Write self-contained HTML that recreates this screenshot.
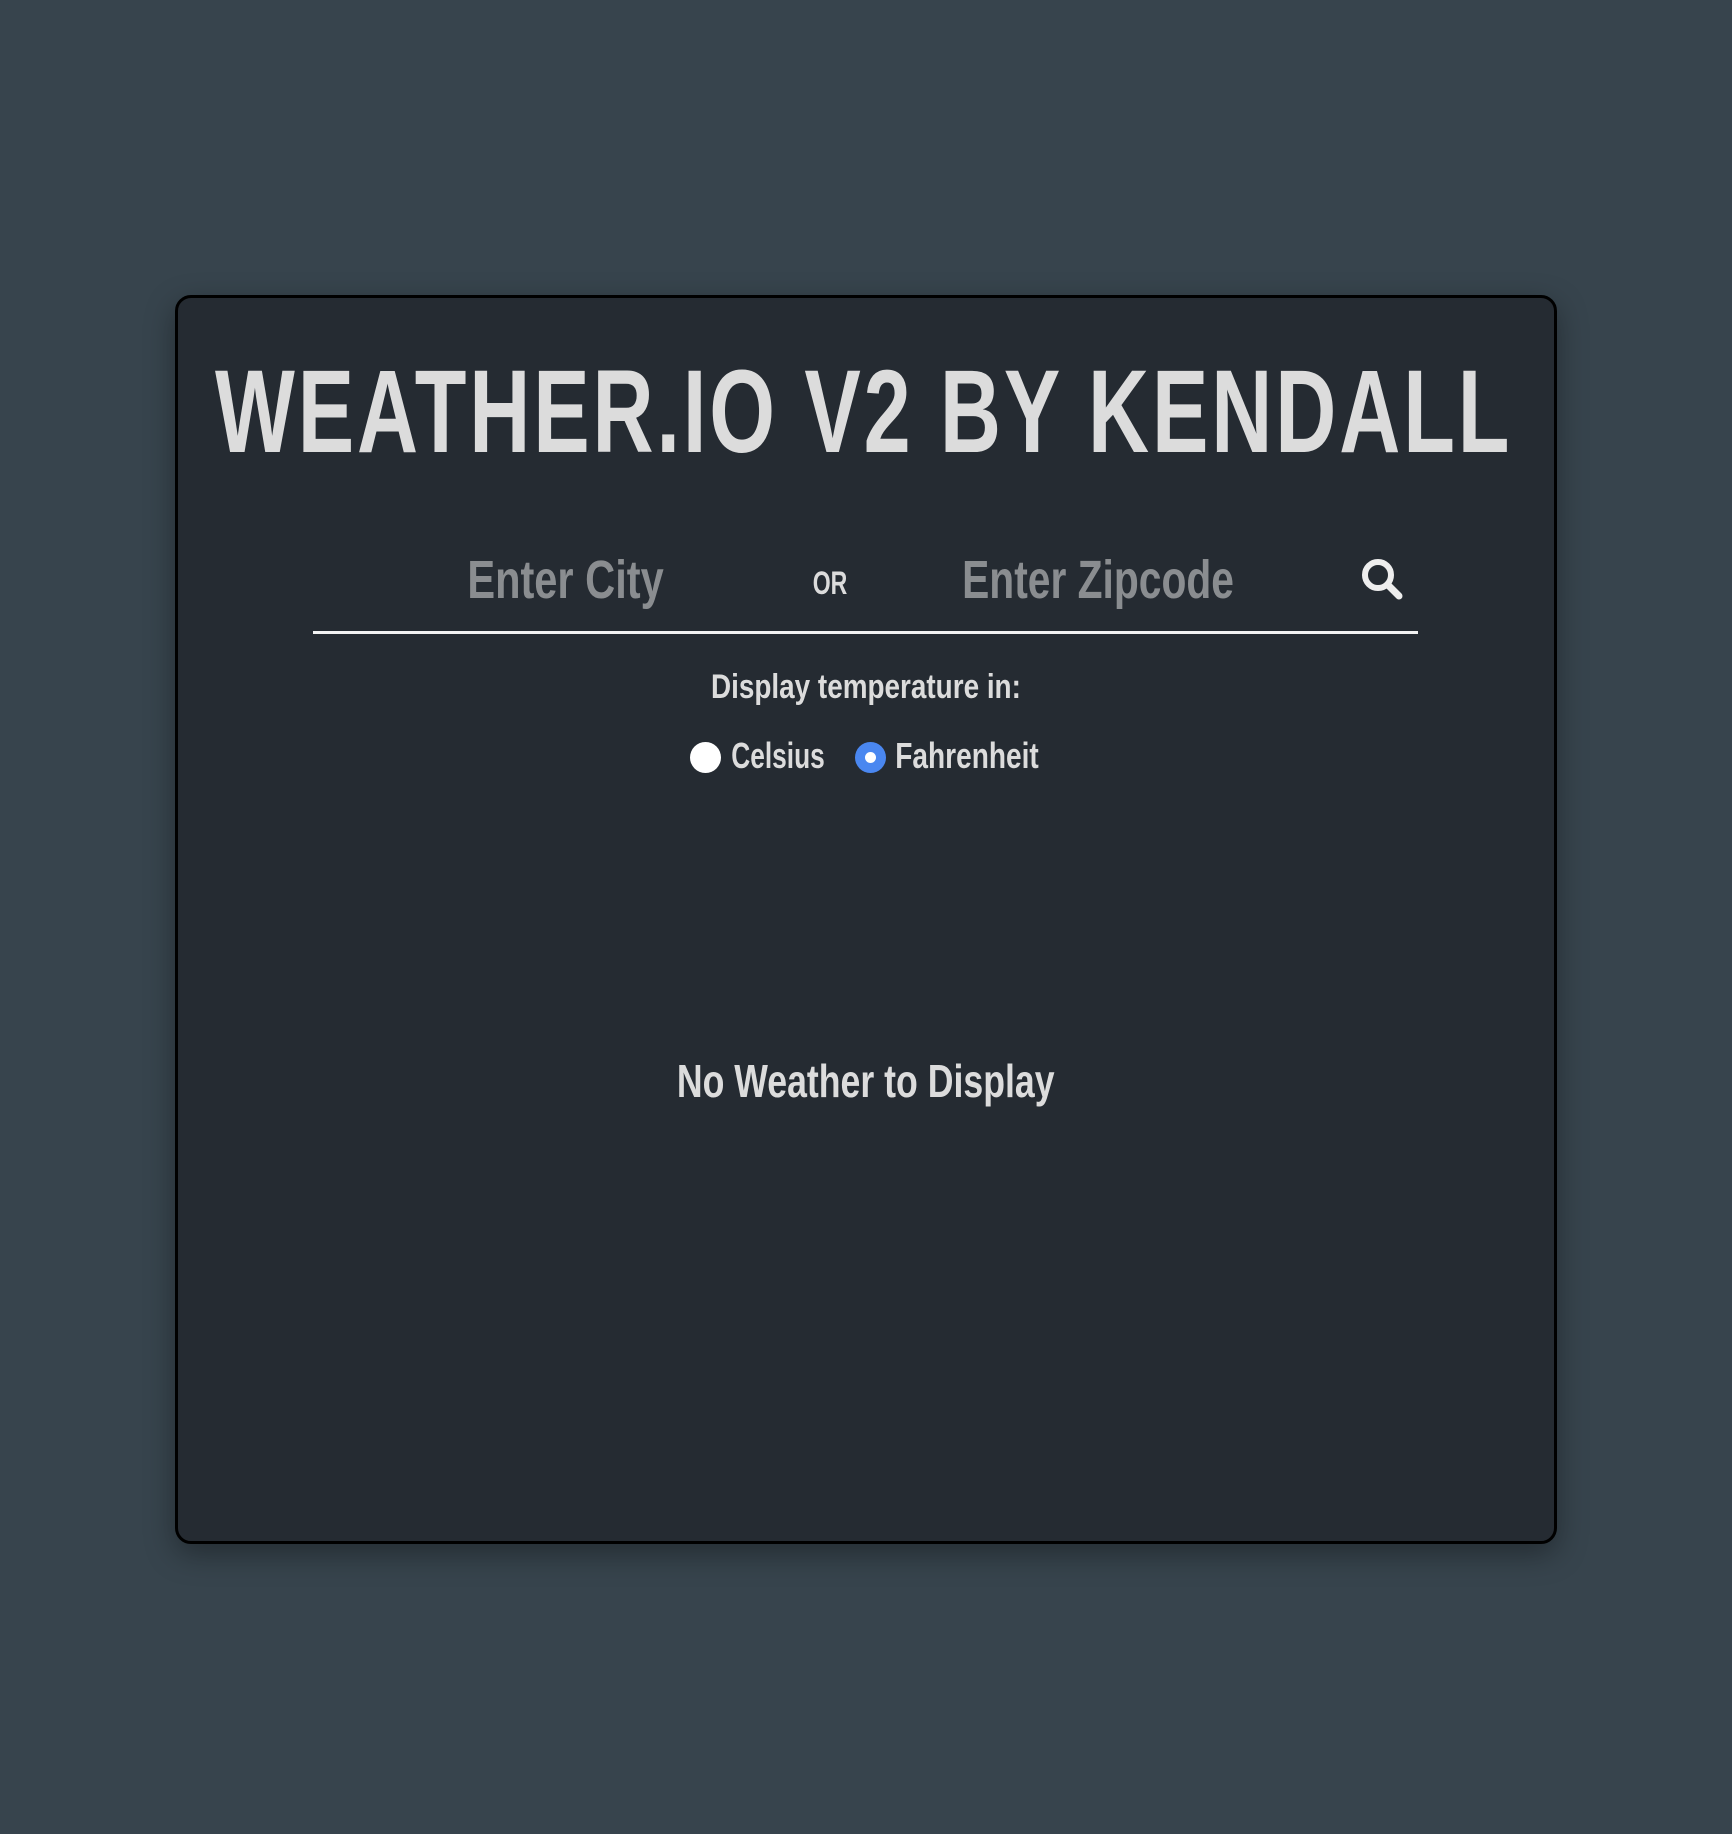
<!DOCTYPE html>
<html><head><style>
html,body{margin:0;padding:0}
body{width:1732px;height:1834px;background:#37444d;position:relative;overflow:hidden;font-family:"Liberation Sans",sans-serif;font-weight:bold}
.card{position:absolute;left:175px;top:295px;width:1376px;height:1243px;background:#252b32;border:3px solid #000;border-radius:16px;box-shadow:0 10px 30px rgba(0,0,0,.35)}
.t{position:absolute;left:0;width:1732px;text-align:center;white-space:nowrap}
.t span{display:inline-block;transform:scaleX(.68);transform-origin:center}
</style></head><body>
<div class="card"></div>
<div class="t" style="left:-502px;width:2732px;top:352px;font-size:118px;color:#dcdcdc;line-height:120px;letter-spacing:4px"><span style="transform:scaleX(.717)">WEATHER.IO V2 BY KENDALL</span></div>
<div class="t" style="left:438px;width:200px;top:550px;font-size:54px;color:#8a8d90;line-height:60px"><span style="transform:scaleX(.77)">Enter City</span></div>
<div class="t" style="left:780px;width:100px;top:565px;font-size:32px;color:#dcdcdc;line-height:36px"><span style="transform:scaleX(.72)">OR</span></div>
<div class="t" style="left:918px;width:315px;top:550px;font-size:54px;color:#8a8d90;line-height:60px"><span style="transform:scaleX(.755)">Enter Zipcode</span></div>
<svg style="position:absolute;left:1358px;top:555px" width="48" height="48" viewBox="0 0 48 48"><circle cx="20" cy="20" r="13" fill="none" stroke="#eee" stroke-width="6"/><line x1="30" y1="30" x2="41" y2="41" stroke="#eee" stroke-width="7" stroke-linecap="round"/></svg>
<div style="position:absolute;left:313px;top:631px;width:1105px;height:3px;background:#f2f2f2"></div>
<div class="t" style="top:668px;font-size:34px;color:#dcdcdc;line-height:38px"><span style="transform:scaleX(.82)">Display temperature in:</span></div>
<div style="position:absolute;left:690px;top:742px;width:31px;height:31px;border-radius:50%;background:#fff"></div>
<div class="t" style="left:714px;width:120px;top:736px;font-size:36px;color:#dcdcdc;line-height:40px"><span style="transform:scaleX(.73)">Celsius</span></div>
<div style="position:absolute;left:855px;top:742px;width:31px;height:31px;border-radius:50%;background:#4a87f0"><div style="position:absolute;left:10px;top:10px;width:11px;height:11px;border-radius:50%;background:#fff"></div></div>
<div class="t" style="left:875px;width:170px;top:736px;font-size:36px;color:#dcdcdc;line-height:40px"><span style="transform:scaleX(.78)">Fahrenheit</span></div>
<div class="t" style="top:1056px;font-size:46px;color:#dcdcdc;line-height:50px"><span style="transform:scaleX(.775)">No Weather to Display</span></div>
</body></html>
